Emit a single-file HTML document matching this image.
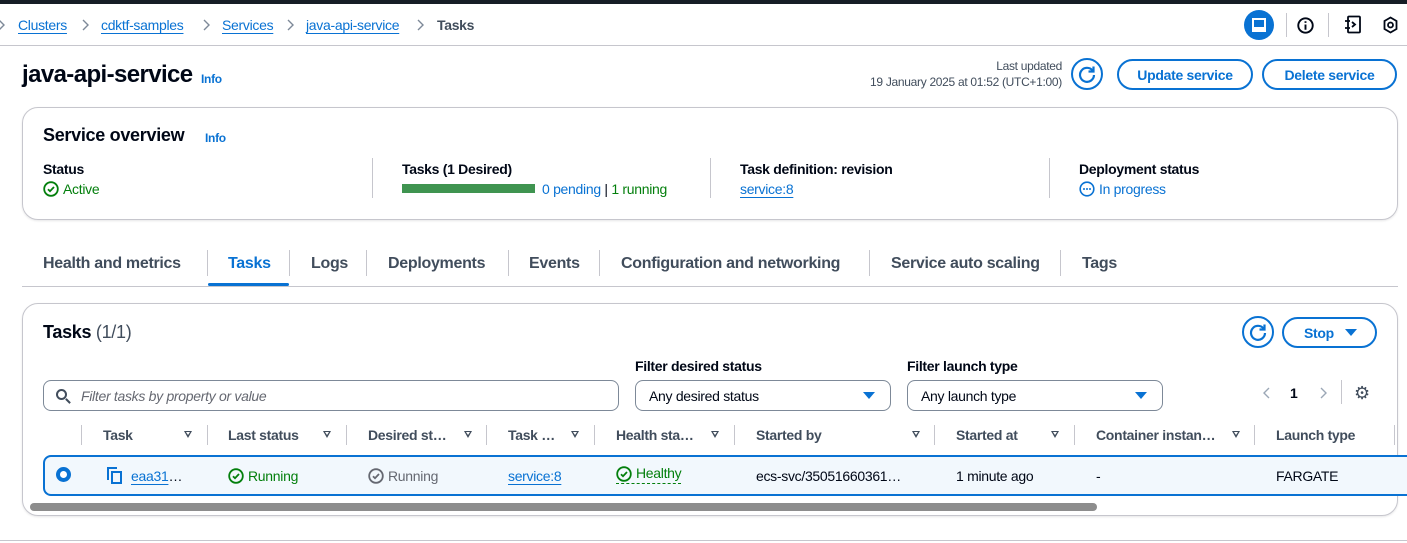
<!DOCTYPE html>
<html><head><meta charset="utf-8"><style>
*{box-sizing:border-box;margin:0;padding:0}
body{width:1407px;height:543px;overflow:hidden;background:#fff;font-family:"Liberation Sans",sans-serif;color:#000716;position:relative;font-size:14px;letter-spacing:-0.3px}
.a{position:absolute;white-space:nowrap}
.lnk{color:#0972d3;text-decoration:underline;text-underline-offset:3px}
.b{font-weight:bold}
.btn{position:absolute;border:2px solid #0972d3;border-radius:20px;color:#0972d3;font-weight:bold;font-size:14px;display:flex;align-items:center;justify-content:center}
.circ{position:absolute;width:32px;height:32px;border:2px solid #0972d3;border-radius:50%}
.sep{position:absolute;width:1px;background:#c6c6cd}
.box{position:absolute;border:1px solid #c6c6cd;border-radius:16px;box-shadow:0 1px 2px rgba(0,7,22,.1)}
.inp{position:absolute;border:1px solid #7d8998;border-radius:8px;height:31px;display:flex;align-items:center;padding-left:13px;font-size:14px}
.tri{position:absolute;width:0;height:0;border-left:6px solid transparent;border-right:6px solid transparent;border-top:7px solid #0972d3}
.hd{position:absolute;top:427px;font-weight:bold;color:#414d5c;font-size:14px}
.dt{position:absolute;width:0;height:0;border-left:4px solid transparent;border-right:4px solid transparent;border-top:7px solid #414d5c;top:431px}
.dt::after{content:"";position:absolute;left:-2px;top:-6px;border-left:2px solid transparent;border-right:2px solid transparent;border-top:3px solid #fff}
.green{color:#037f0c}
.tab{position:absolute;top:255px;font-weight:bold;font-size:16px;color:#414d5c}
svg{position:absolute}
</style></head><body>
<svg width="0" height="0"><defs>
<symbol id="ck" viewBox="0 0 16 16"><circle cx="8" cy="8" r="6.8" fill="none" stroke="currentColor" stroke-width="1.8"/><path d="M5 8.2l2 2 4-4.2" fill="none" stroke="currentColor" stroke-width="1.8"/></symbol>
<symbol id="ch" viewBox="0 0 10 16"><path d="M3 3l5 5-5 5" fill="none" stroke="currentColor" stroke-width="1.4"/></symbol>
<symbol id="rf" viewBox="0 0 20 20"><path d="M15.5 6.5A7 7 0 1 0 17 11" fill="none" stroke="#0972d3" stroke-width="2.2"/><path d="M16.5 2.5v5h-5" fill="none" stroke="#0972d3" stroke-width="2.2"/></symbol>
</defs></svg>
<div class="a" style="left:0;top:0;width:1407px;height:4px;background:#161d26"></div>
<div class="a" style="left:0;top:45px;width:1407px;height:1px;background:#c6c6cd"></div>
<svg style="left:-4px;top:17px;color:#7d8998" width="10" height="16"><use href="#ch"/></svg>
<div class="a lnk" style="left:18px;top:17px">Clusters</div>
<svg style="left:80px;top:17px;color:#7d8998" width="10" height="16"><use href="#ch"/></svg>
<div class="a lnk" style="left:101px;top:17px">cdktf-samples</div>
<svg style="left:201px;top:17px;color:#7d8998" width="10" height="16"><use href="#ch"/></svg>
<div class="a lnk" style="left:222px;top:17px">Services</div>
<svg style="left:285px;top:17px;color:#7d8998" width="10" height="16"><use href="#ch"/></svg>
<div class="a lnk" style="left:306px;top:17px">java-api-service</div>
<svg style="left:415px;top:17px;color:#7d8998" width="10" height="16"><use href="#ch"/></svg>
<div class="a b" style="left:437px;top:17px;color:#414d5c">Tasks</div>
<div class="a" style="left:1244px;top:10px;width:30px;height:30px;border-radius:50%;background:#0972d3"></div>
<div class="a" style="left:1252px;top:18px;width:14px;height:14px;border:2px solid #fff;border-bottom-width:5px"></div>
<div class="sep" style="left:1286px;top:13px;height:24px"></div>
<svg style="left:1297px;top:17px" width="17" height="17" viewBox="0 0 16 16"><circle cx="8" cy="8" r="6.8" fill="none" stroke="#000716" stroke-width="1.8"/><path d="M8 7v5M8 4v1.5" stroke="#000716" stroke-width="1.8"/></svg>
<div class="sep" style="left:1328px;top:13px;height:24px"></div>
<svg style="left:1344px;top:15px" width="18" height="19" viewBox="0 0 18 19"><rect x="4" y="1.5" width="12" height="16" rx="1" fill="none" stroke="#000716" stroke-width="1.8"/><path d="M1 6h5M1 13h5M8 7l3 2.5-3 2.5" fill="none" stroke="#000716" stroke-width="1.8"/></svg>
<svg style="left:1382px;top:16px" width="17" height="18" viewBox="0 0 17 18"><path d="M8.5 1.5l6 3.5v8l-6 3.5-6-3.5v-8z" fill="none" stroke="#000716" stroke-width="1.8"/><circle cx="8.5" cy="9" r="2.5" fill="none" stroke="#000716" stroke-width="1.8"/></svg>

<div class="a b" style="left:22px;top:61px;font-size:24px;letter-spacing:-0.6px">java-api-service</div>
<div class="a b" style="left:201px;top:72px;font-size:12px;color:#0972d3">Info</div>
<div class="a" style="right:345px;top:59px;font-size:12px;color:#414d5c">Last updated</div>
<div class="a" style="right:345px;top:75px;font-size:12px;color:#414d5c">19 January 2025 at 01:52 (UTC+1:00)</div>
<div class="circ" style="left:1071px;top:58px"></div>
<svg style="left:1077px;top:64px" width="20" height="20"><use href="#rf"/></svg>
<div class="btn" style="left:1117px;top:59px;width:136px;height:31px">Update service</div>
<div class="btn" style="left:1262px;top:59px;width:135px;height:31px">Delete service</div>

<div class="box" style="left:22px;top:107px;width:1376px;height:113px"></div>
<div class="a b" style="left:43px;top:125px;font-size:18px">Service overview</div>
<div class="a b" style="left:205px;top:131px;font-size:12px;color:#0972d3">Info</div>
<div class="a b" style="left:43px;top:161px">Status</div>
<svg class="green" style="left:43px;top:181px" width="16" height="16"><use href="#ck"/></svg>
<div class="a green" style="left:63px;top:181px">Active</div>
<div class="sep" style="left:372px;top:158px;height:40px"></div>
<div class="a b" style="left:402px;top:161px">Tasks (1 Desired)</div>
<div class="a" style="left:402px;top:184px;width:133px;height:9px;background:#3f9450"></div>
<div class="a" style="left:542px;top:181px"><span style="color:#0972d3">0 pending</span> | <span class="green">1 running</span></div>
<div class="sep" style="left:710px;top:158px;height:40px"></div>
<div class="a b" style="left:740px;top:161px">Task definition: revision</div>
<div class="a lnk" style="left:740px;top:181px">service:8</div>
<div class="sep" style="left:1049px;top:158px;height:40px"></div>
<div class="a b" style="left:1079px;top:161px">Deployment status</div>
<svg style="left:1079px;top:181px" width="16" height="16" viewBox="0 0 16 16"><circle cx="8" cy="8" r="6.8" fill="none" stroke="#0972d3" stroke-width="1.6"/><circle cx="5" cy="8" r="1" fill="#0972d3"/><circle cx="8" cy="8" r="1" fill="#0972d3"/><circle cx="11" cy="8" r="1" fill="#0972d3"/></svg>
<div class="a" style="left:1099px;top:181px;color:#0972d3">In progress</div>

<div class="a" style="left:22px;top:286px;width:1376px;height:1px;background:#c6c6cd"></div>
<div class="a" style="left:208px;top:283px;width:81px;height:3px;background:#0972d3;border-radius:2px"></div>
<div class="tab" style="left:43px">Health and metrics</div>
<div class="sep" style="left:207px;top:250px;height:26px"></div>
<div class="tab" style="left:228px;color:#0972d3">Tasks</div>
<div class="sep" style="left:289px;top:250px;height:26px"></div>
<div class="tab" style="left:311px">Logs</div>
<div class="sep" style="left:366px;top:250px;height:26px"></div>
<div class="tab" style="left:388px">Deployments</div>
<div class="sep" style="left:508px;top:250px;height:26px"></div>
<div class="tab" style="left:529px">Events</div>
<div class="sep" style="left:599px;top:250px;height:26px"></div>
<div class="tab" style="left:621px">Configuration and networking</div>
<div class="sep" style="left:869px;top:250px;height:26px"></div>
<div class="tab" style="left:891px">Service auto scaling</div>
<div class="sep" style="left:1060px;top:250px;height:26px"></div>
<div class="tab" style="left:1082px">Tags</div>

<div class="box" style="left:22px;top:303px;width:1376px;height:213px;overflow:hidden"></div>
<div class="a b" style="left:43px;top:322px;font-size:18px">Tasks <span style="font-weight:normal;color:#414d5c">(1/1)</span></div>
<div class="circ" style="left:1242px;top:316px"></div>
<svg style="left:1248px;top:322px" width="20" height="20"><use href="#rf"/></svg>
<div class="btn" style="left:1282px;top:317px;width:95px;height:31px;justify-content:flex-start;padding-left:20px">Stop</div>
<div class="tri" style="left:1345px;top:329px"></div>
<div class="a b" style="left:635px;top:358px">Filter desired status</div>
<div class="a b" style="left:907px;top:358px">Filter launch type</div>
<div class="inp" style="left:43px;top:380px;width:576px;padding-left:37px;font-style:italic;color:#656871">Filter tasks by property or value</div>
<div class="a" style="left:56px;top:389px;width:11px;height:11px;border:2px solid #414d5c;border-radius:50%"></div>
<div class="a" style="left:65px;top:400px;width:6px;height:2px;background:#414d5c;transform:rotate(45deg)"></div>
<div class="inp" style="left:635px;top:380px;width:256px">Any desired status</div>
<div class="tri" style="left:863px;top:392px"></div>
<div class="inp" style="left:907px;top:380px;width:256px">Any launch type</div>
<div class="tri" style="left:1135px;top:392px"></div>
<svg style="left:1262px;top:385px;color:#9ba7b6;transform:scaleX(-1)" width="10" height="16"><use href="#ch"/></svg>
<div class="a b" style="left:1290px;top:385px">1</div>
<svg style="left:1318px;top:385px;color:#9ba7b6" width="10" height="16"><use href="#ch"/></svg>
<div class="sep" style="left:1341px;top:380px;height:24px"></div>
<div class="a" style="left:1354px;top:383px;font-size:18px;color:#414d5c">⚙</div>

<div class="sep" style="left:81px;top:425px;height:20px"></div>
<div class="hd" style="left:103px">Task</div><div class="dt" style="left:184px"></div>
<div class="sep" style="left:207px;top:425px;height:20px"></div>
<div class="hd" style="left:228px">Last status</div><div class="dt" style="left:323px"></div>
<div class="sep" style="left:346px;top:425px;height:20px"></div>
<div class="hd" style="left:368px">Desired st…</div><div class="dt" style="left:464px"></div>
<div class="sep" style="left:486px;top:425px;height:20px"></div>
<div class="hd" style="left:508px">Task …</div><div class="dt" style="left:571px"></div>
<div class="sep" style="left:594px;top:425px;height:20px"></div>
<div class="hd" style="left:616px">Health sta…</div><div class="dt" style="left:711px"></div>
<div class="sep" style="left:734px;top:425px;height:20px"></div>
<div class="hd" style="left:756px">Started by</div><div class="dt" style="left:912px"></div>
<div class="sep" style="left:934px;top:425px;height:20px"></div>
<div class="hd" style="left:956px">Started at</div><div class="dt" style="left:1051px"></div>
<div class="sep" style="left:1074px;top:425px;height:20px"></div>
<div class="hd" style="left:1096px">Container instan…</div><div class="dt" style="left:1232px"></div>
<div class="sep" style="left:1254px;top:425px;height:20px"></div>
<div class="hd" style="left:1276px">Launch type</div>
<div class="sep" style="left:1394px;top:425px;height:20px"></div>

<div class="a" style="left:43px;top:455px;width:1364px;height:41px;background:#f2f8fd;border:2px solid #0972d3;border-right:none;border-radius:8px 0 0 8px"></div>
<div class="a" style="left:56px;top:467px;width:15px;height:15px;border-radius:50%;border:4.5px solid #0972d3;background:#fff"></div>
<div class="a" style="left:107px;top:467px;width:10px;height:13px;border:2px solid #0972d3;border-right:none;border-bottom:none"></div>
<div class="a" style="left:111px;top:471px;width:11px;height:13px;border:2px solid #0972d3"></div>
<div class="a" style="left:131px;top:468px"><span class="lnk">eaa31</span>…</div>
<svg class="green" style="left:228px;top:468px" width="16" height="16"><use href="#ck"/></svg>
<div class="a green" style="left:248px;top:468px">Running</div>
<svg style="left:368px;top:468px;color:#656871" width="16" height="16"><use href="#ck"/></svg>
<div class="a" style="left:388px;top:468px;color:#656871">Running</div>
<div class="a lnk" style="left:508px;top:468px">service:8</div>
<div class="a green" style="left:616px;top:465px;border-bottom:1px dashed #037f0c;padding-bottom:2px;padding-left:20px">Healthy</div>
<svg class="green" style="left:616px;top:466px" width="16" height="16"><use href="#ck"/></svg>
<div class="a" style="left:756px;top:468px">ecs-svc/35051660361…</div>
<div class="a" style="left:956px;top:468px">1 minute ago</div>
<div class="a" style="left:1096px;top:468px">-</div>
<div class="a" style="left:1276px;top:468px">FARGATE</div>
<div class="a" style="left:30px;top:503px;width:1067px;height:8px;border-radius:4px;background:#8d8d8d"></div>
<div class="a" style="left:0;top:540px;width:1407px;height:1px;background:#c6c6cd"></div>
</body></html>
